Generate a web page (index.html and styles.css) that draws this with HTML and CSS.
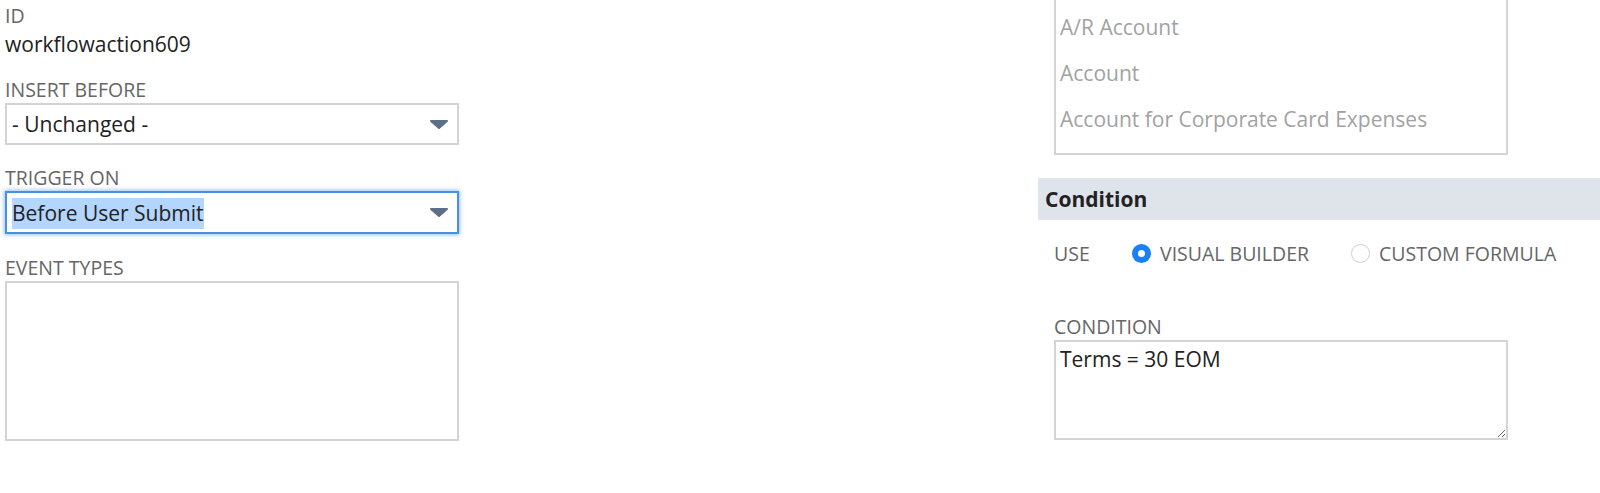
FILE: index.html
```html
<!DOCTYPE html>
<html lang="en">
<head>
    <meta charset="UTF-8">
    <meta name="viewport" content="width=device-width, initial-scale=1.0">
    <title>Workflow Action</title>
    <link rel="stylesheet" href="styles.css">
</head>
<body>
    <div class="page">
        <div class="col-left">
            <div class="field field-first">
                <div class="label">ID</div>
                <div class="value">workflowaction609</div>
            </div>

            <div class="field">
                <div class="label">Insert Before</div>
                <div class="select">
                    <span class="select-text">- Unchanged -</span>
                    <svg class="arrow" width="20" height="11" viewBox="0 0 20 11"><path d="M2 2 H18 L10 9 Z"/></svg>
                </div>
            </div>

            <div class="field field-trigger">
                <div class="label">Trigger On</div>
                <div class="select focused">
                    <span class="select-text"><span class="selected">Before User Submit</span></span>
                    <svg class="arrow" width="20" height="11" viewBox="0 0 20 11"><path d="M2 2 H18 L10 9 Z"/></svg>
                </div>
            </div>

            <div class="field field-events">
                <div class="label">Event Types</div>
                <div class="multi-box"></div>
            </div>
        </div>

        <div class="col-right">
            <div class="listbox">
                <div class="list-item">A/R Account</div>
                <div class="list-item">Account</div>
                <div class="list-item">Account for Corporate Card Expenses</div>
            </div>

            <div class="section-head">Condition</div>

            <div class="use-row">
                <span class="use-label">Use</span>
                <label class="radio-opt">
                    <span class="radio checked"></span>
                    <span class="radio-text">Visual Builder</span>
                </label>
                <label class="radio-opt">
                    <span class="radio"></span>
                    <span class="radio-text">Custom Formula</span>
                </label>
            </div>

            <div class="field cond-field">
                <div class="label">Condition</div>
                <textarea class="cond-text">Terms = 30 EOM</textarea>
            </div>
        </div>
    </div>
</body>
</html>
```

FILE: styles.css
```css
body {
    margin: 0;
    font-family: "Open Sans", Arial, sans-serif;
    background-color: #ffffff;
    color: #222222;
    overflow: hidden;
}

.page {
    display: grid;
    grid-template-columns: 1038px 1fr;
}

.col-left {
    padding-left: 5px;
    width: 454px;
}

.field {
    margin-top: 20px;
}

.field-first {
    margin-top: 4px;
}

.field-trigger {
    margin-top: 21px;
}

.field-events {
    margin-top: 22px;
}

.label {
    font-size: 19.5px;
    line-height: 24px;
    color: #666666;
    text-transform: uppercase;
    margin-bottom: 1px;
}

.value {
    font-size: 21px;
    line-height: 28px;
    margin-top: 2px;
}

.select {
    height: 42px;
    box-sizing: border-box;
    border: 2px solid #d4d4d4;
    display: flex;
    align-items: center;
    justify-content: space-between;
    padding: 0 8px 0 5px;
    font-size: 21px;
    background-color: #ffffff;
}

.select.focused {
    height: 43px;
    border-color: #4a90e2;
    box-shadow: 0 0 4px 1px rgba(74, 144, 226, 0.55);
}

.selected {
    background-color: #b4d5fe;
    padding: 1px 0 2px;
}

.arrow path {
    fill: #5b6e8a;
    stroke: #5b6e8a;
    stroke-width: 2;
    stroke-linejoin: round;
}

.multi-box {
    height: 160px;
    box-sizing: border-box;
    border: 2px solid #d4d4d4;
}

.col-right {
    display: flex;
    flex-direction: column;
}

.listbox {
    margin: -12px 0 0 16px;
    width: 454px;
    box-sizing: border-box;
    border: 2px solid #d4d4d4;
    padding: 14px 0 11px 4px;
}

.list-item {
    font-size: 21px;
    line-height: 46px;
    color: #a2a2a2;
    white-space: nowrap;
}

.section-head {
    margin-top: 23px;
    height: 42px;
    line-height: 42px;
    padding-left: 7px;
    background-color: #dfe4eb;
    font-size: 21px;
    font-weight: bold;
    color: #222222;
}

.use-row {
    display: flex;
    align-items: center;
    height: 24px;
    margin: 21px 0 0 16px;
    font-size: 19.5px;
    color: #666666;
    text-transform: uppercase;
}

.use-label {
    width: 78px;
}

.radio-opt {
    display: flex;
    align-items: center;
    gap: 9px;
    margin-right: 42px;
}

.radio {
    width: 19px;
    height: 19px;
    box-sizing: border-box;
    border-radius: 50%;
    border: 1px solid #cfcfcf;
    background-color: #ffffff;
    display: flex;
    align-items: center;
    justify-content: center;
}

.radio.checked {
    border: none;
    background-color: #1b7ff5;
}

.radio.checked::after {
    content: "";
    width: 7px;
    height: 7px;
    border-radius: 50%;
    background-color: #ffffff;
}

.cond-field {
    margin: 50px 0 0 16px;
}

.cond-text {
    display: block;
    width: 454px;
    height: 100px;
    box-sizing: border-box;
    border: 2px solid #d4d4d4;
    padding: 3px 4px;
    font-family: "Open Sans", Arial, sans-serif;
    font-size: 21px;
    line-height: 28px;
    color: #222222;
    resize: vertical;
    outline: none;
}
```
